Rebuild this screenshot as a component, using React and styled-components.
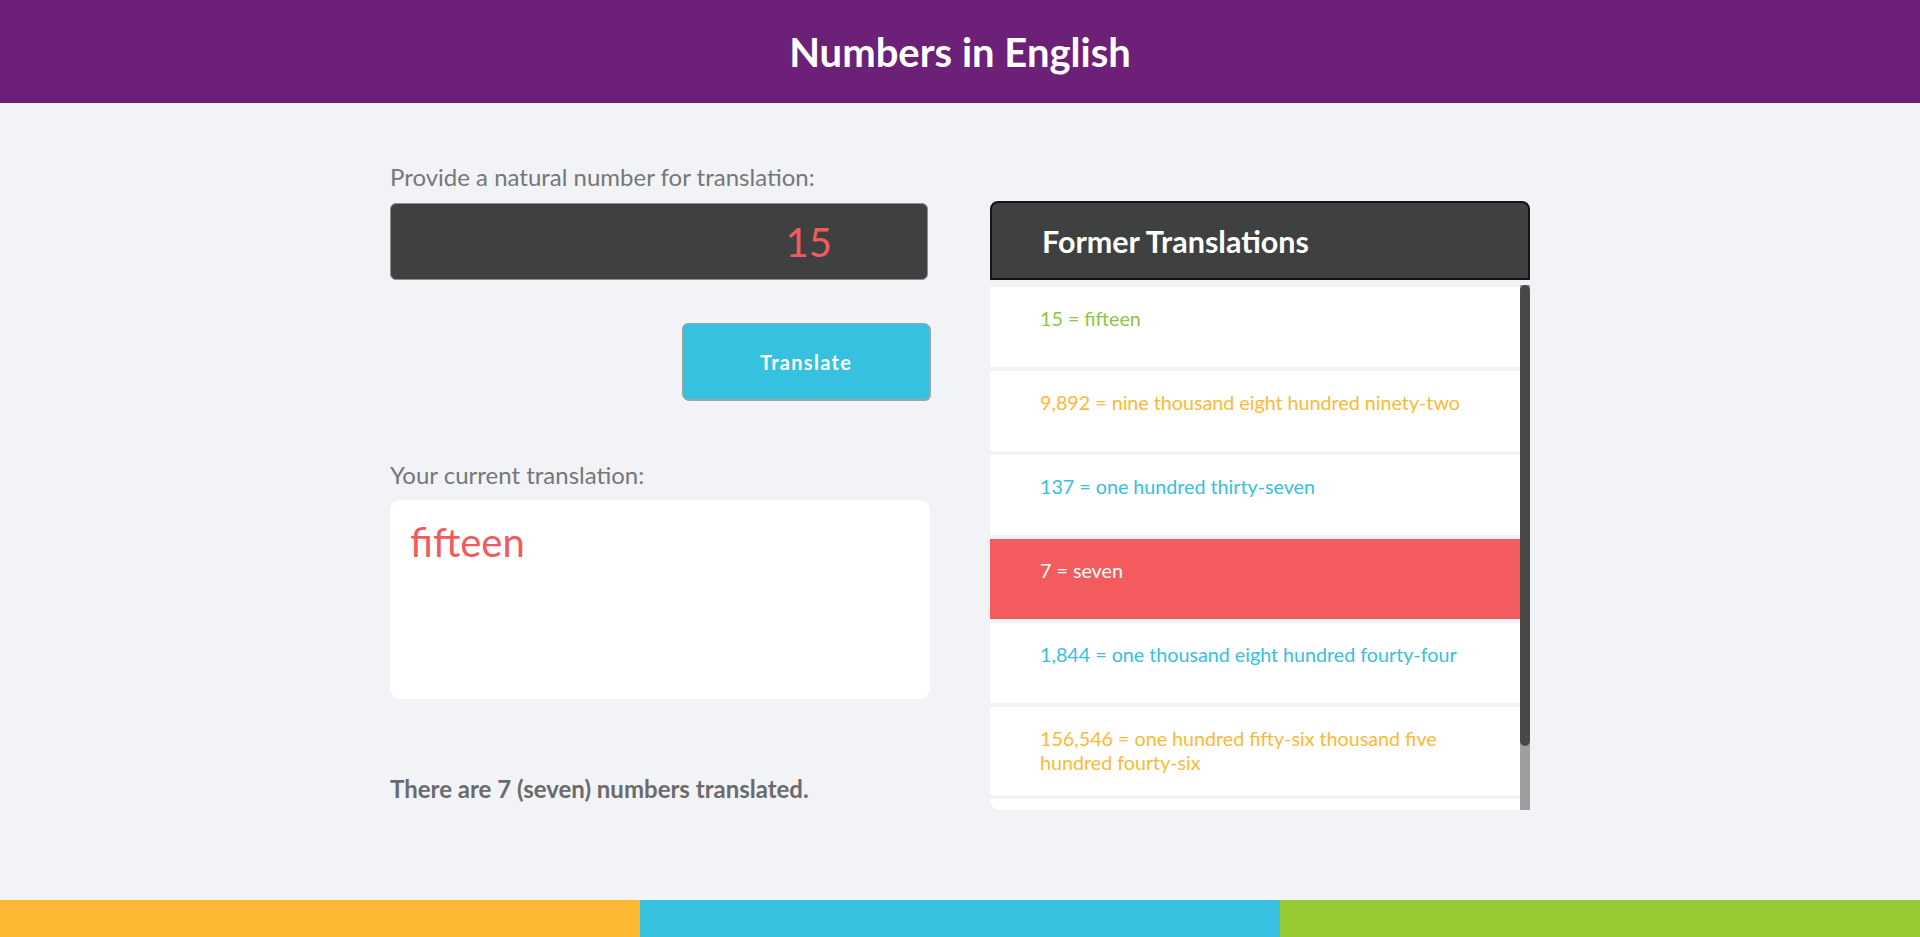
import React, { useState, useRef, useLayoutEffect } from "react";
import styled, { createGlobalStyle } from "styled-components";

const GlobalStyle = createGlobalStyle`
  html, body {
    margin: 0;
    padding: 0;
    background: #f2f3f7;
    font-family: Lato, "Open Sans", sans-serif;
  }
  * { box-sizing: border-box; }
`;

const Page = styled.div`
  min-height: 100vh;
  display: flex;
  flex-direction: column;
`;

const TopBar = styled.header`
  height: 103px;
  background: #6d2077;
  display: flex;
  align-items: center;
  justify-content: center;
`;

const Title = styled.h1`
  margin: 0;
  color: #ffffff;
  font-size: 40px;
  font-weight: 700;
  line-height: 48px;
`;

const Main = styled.main`
  flex: 1;
  width: 1140px;
  margin: 0 auto;
  padding-top: 59px;
  display: grid;
  grid-template-columns: 540px 540px;
  column-gap: 60px;
  align-items: start;
`;

const LeftColumn = styled.section`
  display: flex;
  flex-direction: column;
`;

const FieldLabel = styled.label`
  display: block;
  color: #777777;
  font-size: 24px;
  line-height: 29px;
  margin-top: ${(p) => p.$top || 0}px;
`;

const NumberInput = styled.input`
  margin-top: 12px;
  width: 538px;
  height: 77px;
  background: #3f4040;
  border: 1px solid #8f8f8f;
  border-radius: 6px;
  color: #f25b5e;
  font-family: Lato, sans-serif;
  font-size: 40px;
  text-align: right;
  padding: 0 95px 0 20px;
  outline: none;
`;

const ButtonRow = styled.div`
  display: flex;
  justify-content: flex-end;
  margin-top: 43px;
`;

const TranslateButton = styled.button`
  width: 248px;
  height: 77px;
  background: #35c1df;
  border: 1px solid #a2a2a2;
  box-shadow: 1px 1px 0 #a2a2a2;
  border-radius: 6px;
  color: #ffffff;
  font-family: Lato, sans-serif;
  font-size: 20px;
  font-weight: 700;
  letter-spacing: 1.3px;
  cursor: pointer;
`;

const ResultBox = styled.div`
  margin-top: 11px;
  height: 199px;
  background: #ffffff;
  border-radius: 10px;
  padding: 18px 20px;
  color: #f25b5e;
  font-size: 40px;
  line-height: 48px;
`;

const Summary = styled.p`
  margin: 75px 0 0;
  color: #6b6b6b;
  font-size: 24px;
  font-weight: 700;
  line-height: 29px;
`;

const RightColumn = styled.section`
  padding-top: 39px;
  display: flex;
  flex-direction: column;
`;

const PanelHead = styled.div`
  height: 79px;
  background: #3f4040;
  border: 2px solid #141414;
  border-radius: 8px 8px 0 0;
  display: flex;
  align-items: center;
  padding-left: 50px;
`;

const PanelTitle = styled.h2`
  margin: 0;
  color: #ffffff;
  font-size: 30.5px;
  font-weight: 700;
  line-height: 36px;
`;

const ListFrame = styled.div`
  margin-top: 5px;
  height: 525px;
  display: flex;
  overflow: hidden;
  border-bottom-left-radius: 10px;
`;

const HistoryList = styled.ul`
  flex: 1;
  list-style: none;
  margin: 0;
  padding: 2px 0 0;
  overflow-y: auto;
  scrollbar-width: none;
  &::-webkit-scrollbar {
    display: none;
  }
`;

const ScrollTrack = styled.div`
  width: 10px;
  flex: none;
  background: #9e9e9e;
`;

const ScrollThumb = styled.div`
  width: 10px;
  background: #484848;
  border-radius: 5px;
`;

const HistoryItem = styled.li`
  min-height: 80px;
  margin-bottom: 4px;
  padding: 20px 50px;
  background: ${(p) => (p.$active ? "#f35b5e" : "#ffffff")};
  color: ${(p) => p.$color};
  font-size: 19.7px;
  line-height: 24px;
`;

const Footer = styled.footer`
  display: grid;
  grid-template-columns: 1fr 1fr 1fr;
  height: 37px;
`;

const Stripe = styled.div`
  background: ${(p) => p.$color};
`;

const history = [
  { text: "15 = fifteen", color: "#8cc63f" },
  { text: "9,892 = nine thousand eight hundred ninety-two", color: "#fdb933" },
  { text: "137 = one hundred thirty-seven", color: "#35c1df" },
  { text: "7 = seven", color: "#ffffff", active: true },
  { text: "1,844 = one thousand eight hundred fourty-four", color: "#35c1df" },
  { text: "156,546 = one hundred fifty-six thousand five hundred fourty-six", color: "#fdb933" },
  { text: "42 = fourty-two", color: "#8cc63f" },
];

function History() {
  const listRef = useRef(null);
  const [thumb, setThumb] = useState({ height: 461, top: 0 });

  const measure = () => {
    const el = listRef.current;
    if (!el) return;
    const track = el.clientHeight;
    const ratio = Math.min(1, el.clientHeight / el.scrollHeight);
    setThumb({
      height: Math.round(track * ratio),
      top: Math.round((el.scrollTop / el.scrollHeight) * track),
    });
  };

  useLayoutEffect(measure, []);

  return (
    <ListFrame>
      <HistoryList ref={listRef} onScroll={measure}>
        {history.map((h, i) => (
          <HistoryItem key={i} $color={h.color} $active={h.active}>
            {h.text}
          </HistoryItem>
        ))}
      </HistoryList>
      <ScrollTrack>
        <ScrollThumb style={{ height: thumb.height, marginTop: thumb.top }} />
      </ScrollTrack>
    </ListFrame>
  );
}

export default function App() {
  const [value, setValue] = useState("15");
  return (
    <Page>
      <GlobalStyle />
      <TopBar>
        <Title>Numbers in English</Title>
      </TopBar>
      <Main>
        <LeftColumn>
          <FieldLabel htmlFor="num">Provide a natural number for translation:</FieldLabel>
          <NumberInput id="num" value={value} onChange={(e) => setValue(e.target.value)} />
          <ButtonRow>
            <TranslateButton type="button">Translate</TranslateButton>
          </ButtonRow>
          <FieldLabel $top={60}>Your current translation:</FieldLabel>
          <ResultBox>fifteen</ResultBox>
          <Summary>There are 7 (seven) numbers translated.</Summary>
        </LeftColumn>
        <RightColumn>
          <PanelHead>
            <PanelTitle>Former Translations</PanelTitle>
          </PanelHead>
          <History />
        </RightColumn>
      </Main>
      <Footer>
        <Stripe $color="#fdb933" />
        <Stripe $color="#35c1df" />
        <Stripe $color="#98ca33" />
      </Footer>
    </Page>
  );
}
